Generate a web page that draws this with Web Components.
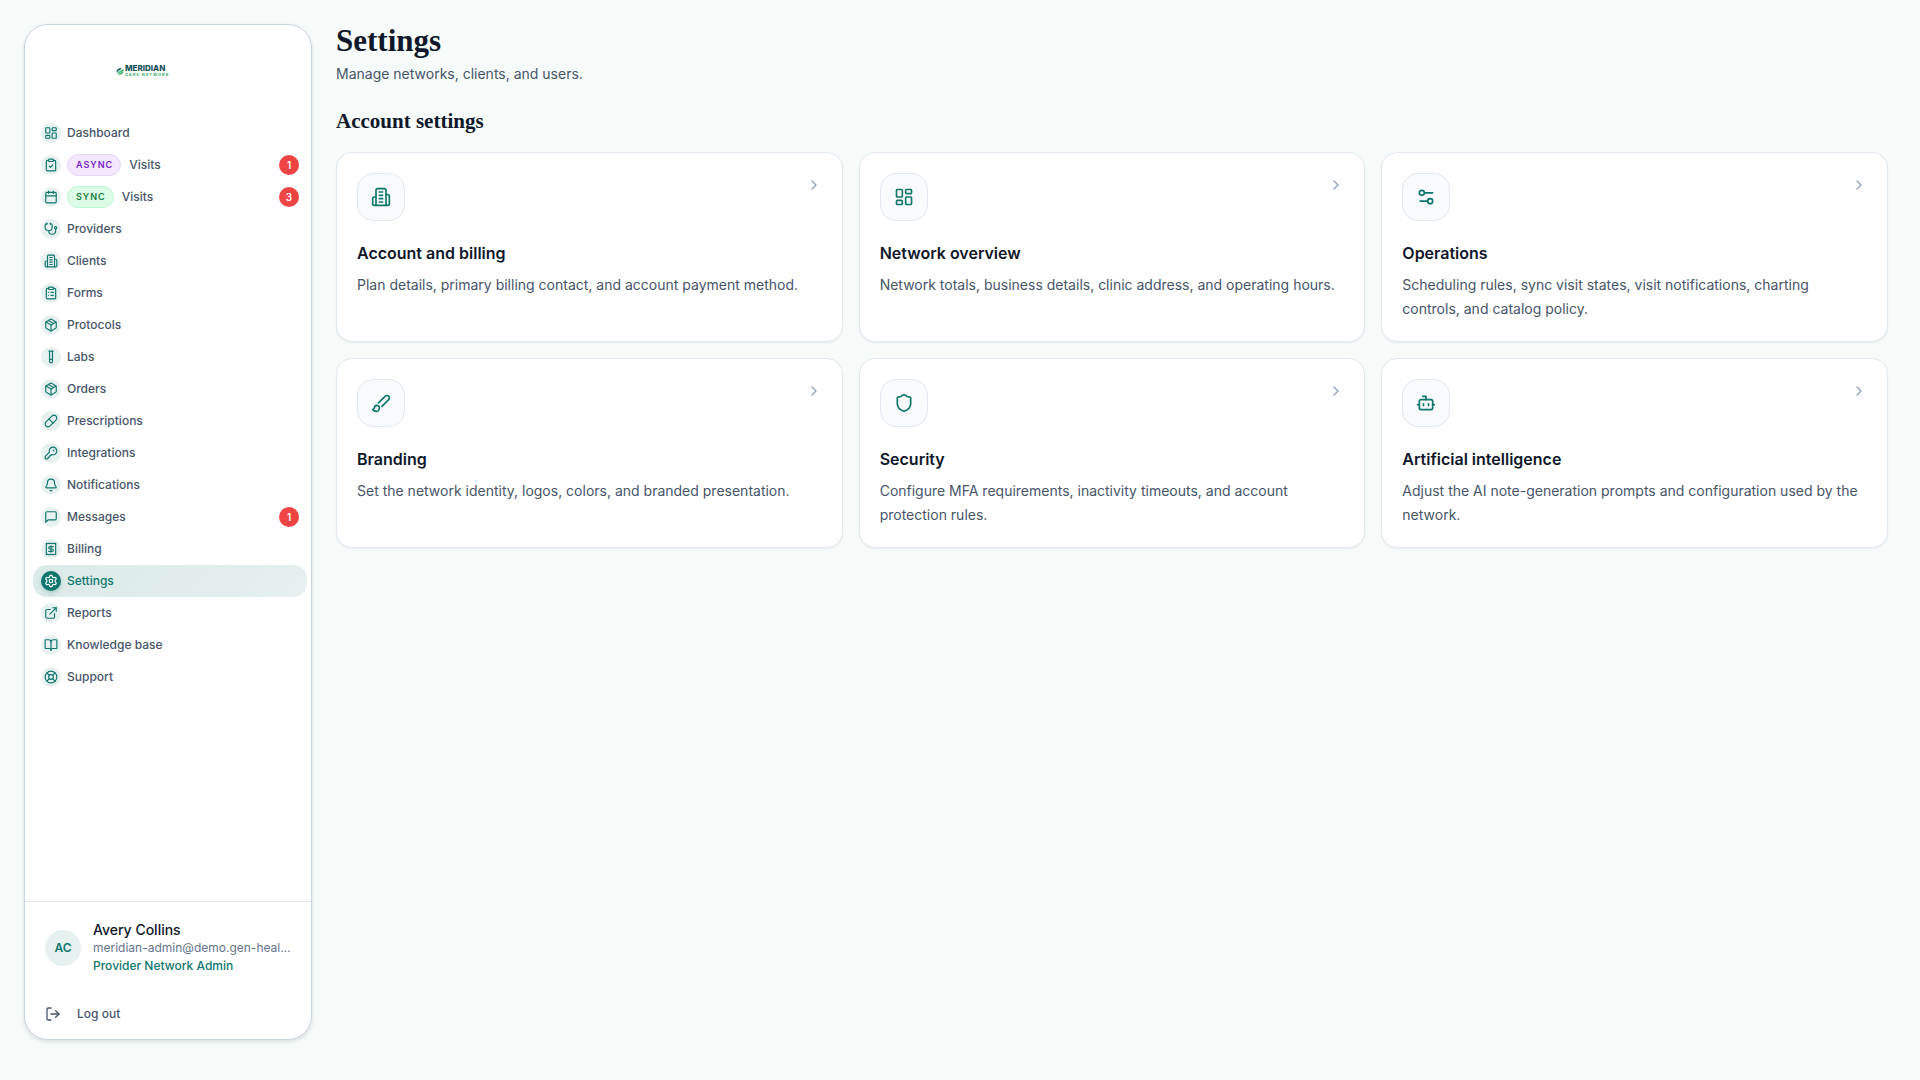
<!DOCTYPE html>
<html lang="en">
<head>
<meta charset="UTF-8">
<meta name="viewport" content="width=device-width, initial-scale=1">
<title>Settings</title>
<style>
    * { box-sizing: border-box; }
    body {
        margin: 0;
        min-height: 100vh;
        background: #f6faf9;
        color: #0f172a;
        font-family: Inter, "Liberation Sans", sans-serif;
        font-size: 14px;
    }
</style>
</head>
<body>
<app-shell>
    <app-sidebar slot="sidebar">
        <brand-logo slot="logo"></brand-logo>
        <nav-item icon="dashboard">Dashboard</nav-item>
        <nav-item icon="clipboard-check" tag="ASYNC" tone="purple" count="1">Visits</nav-item>
        <nav-item icon="calendar" tag="SYNC" tone="green" count="3">Visits</nav-item>
        <nav-item icon="stethoscope">Providers</nav-item>
        <nav-item icon="building">Clients</nav-item>
        <nav-item icon="clipboard-list">Forms</nav-item>
        <nav-item icon="package">Protocols</nav-item>
        <nav-item icon="test-tube">Labs</nav-item>
        <nav-item icon="package">Orders</nav-item>
        <nav-item icon="pill">Prescriptions</nav-item>
        <nav-item icon="key">Integrations</nav-item>
        <nav-item icon="bell">Notifications</nav-item>
        <nav-item icon="message" count="1">Messages</nav-item>
        <nav-item icon="receipt">Billing</nav-item>
        <nav-item icon="settings" active>Settings</nav-item>
        <nav-item icon="external-link">Reports</nav-item>
        <nav-item icon="book-open">Knowledge base</nav-item>
        <nav-item icon="life-buoy">Support</nav-item>
        <user-panel slot="footer" initials="AC">
            <span slot="name">Avery Collins</span>
            <span slot="email">meridian-admin@demo.gen-heal…</span>
            <span slot="role">Provider Network Admin</span>
        </user-panel>
    </app-sidebar>

    <page-header>
        <span slot="title">Settings</span>
        <span slot="subtitle">Manage networks, clients, and users.</span>
    </page-header>
    <settings-section>
        <span slot="heading">Account settings</span>
        <settings-card icon="building">
            <span slot="title">Account and billing</span>
            Plan details, primary billing contact, and account payment method.
        </settings-card>
        <settings-card icon="dashboard">
            <span slot="title">Network overview</span>
            Network totals, business details, clinic address, and operating hours.
        </settings-card>
        <settings-card icon="sliders">
            <span slot="title">Operations</span>
            Scheduling rules, sync visit states, visit notifications, charting controls, and catalog policy.
        </settings-card>
        <settings-card icon="brush">
            <span slot="title">Branding</span>
            Set the network identity, logos, colors, and branded presentation.
        </settings-card>
        <settings-card icon="shield">
            <span slot="title">Security</span>
            Configure MFA requirements, inactivity timeouts, and account protection rules.
        </settings-card>
        <settings-card icon="bot">
            <span slot="title">Artificial intelligence</span>
            Adjust the AI note-generation prompts and configuration used by the network.
        </settings-card>
    </settings-section>
</app-shell>

<script>
// 24x24 stroke icons
const ICONS = {
    'dashboard': '<rect width="7" height="9" x="3" y="3" rx="1"/><rect width="7" height="5" x="14" y="3" rx="1"/><rect width="7" height="9" x="14" y="12" rx="1"/><rect width="7" height="5" x="3" y="16" rx="1"/>',
    'clipboard-check': '<rect width="8" height="4" x="8" y="2" rx="1"/><path d="M16 4h2a2 2 0 0 1 2 2v14a2 2 0 0 1-2 2H6a2 2 0 0 1-2-2V6a2 2 0 0 1 2-2h2"/><path d="m9 14 2 2 4-4"/>',
    'calendar': '<path d="M8 2v4"/><path d="M16 2v4"/><rect width="18" height="18" x="3" y="4" rx="2"/><path d="M3 10h18"/>',
    'stethoscope': '<path d="M11 2v2"/><path d="M5 2v2"/><path d="M5 3H4a2 2 0 0 0-2 2v4a6 6 0 0 0 12 0V5a2 2 0 0 0-2-2h-1"/><path d="M8 15a6 6 0 0 0 12 0v-3"/><circle cx="20" cy="10" r="2"/>',
    'building': '<path d="M6 22V4a2 2 0 0 1 2-2h8a2 2 0 0 1 2 2v18Z"/><path d="M6 12H4a2 2 0 0 0-2 2v6a2 2 0 0 0 2 2h2"/><path d="M18 9h2a2 2 0 0 1 2 2v9a2 2 0 0 1-2 2h-2"/><path d="M10 6h4"/><path d="M10 10h4"/><path d="M10 14h4"/><path d="M10 18h4"/>',
    'clipboard-list': '<rect width="8" height="4" x="8" y="2" rx="1"/><path d="M16 4h2a2 2 0 0 1 2 2v14a2 2 0 0 1-2 2H6a2 2 0 0 1-2-2V6a2 2 0 0 1 2-2h2"/><path d="M12 11h4"/><path d="M12 16h4"/><path d="M8 11h.01"/><path d="M8 16h.01"/>',
    'package': '<path d="m7.5 4.27 9 5.15"/><path d="M21 8a2 2 0 0 0-1-1.73l-7-4a2 2 0 0 0-2 0l-7 4A2 2 0 0 0 3 8v8a2 2 0 0 0 1 1.73l7 4a2 2 0 0 0 2 0l7-4A2 2 0 0 0 21 16Z"/><path d="m3.3 7 8.7 5 8.7-5"/><path d="M12 22V12"/>',
    'test-tube': '<path d="M14.5 2v17.5c0 1.4-1.1 2.5-2.5 2.5c-1.4 0-2.5-1.1-2.5-2.5V2"/><path d="M8.5 2h7"/><path d="M14.5 16h-5"/>',
    'pill': '<path d="m10.5 20.5 10-10a4.95 4.95 0 1 0-7-7l-10 10a4.95 4.95 0 1 0 7 7Z"/><path d="m8.5 8.5 7 7"/>',
    'key': '<path d="M2.586 17.414A2 2 0 0 0 2 18.828V21a1 1 0 0 0 1 1h3a1 1 0 0 0 1-1v-1a1 1 0 0 1 1-1h1a1 1 0 0 0 1-1v-1a1 1 0 0 1 1-1h.172a2 2 0 0 0 1.414-.586l.814-.814a6.5 6.5 0 1 0-4-4z"/><circle cx="16.5" cy="7.5" r=".5" fill="currentColor"/>',
    'bell': '<path d="M10.268 21a2 2 0 0 0 3.464 0"/><path d="M3.262 15.326A1 1 0 0 0 4 17h16a1 1 0 0 0 .74-1.673C19.41 13.956 18 12.499 18 8A6 6 0 0 0 6 8c0 4.499-1.411 5.956-2.738 7.326"/>',
    'message': '<path d="M21 15a2 2 0 0 1-2 2H7l-4 4V5a2 2 0 0 1 2-2h14a2 2 0 0 1 2 2z"/>',
    'receipt': '<path d="M4 2v20l2-1 2 1 2-1 2 1 2-1 2 1 2-1 2 1V2l-2 1-2-1-2 1-2-1-2 1-2-1-2 1Z"/><path d="M16 8h-6a2 2 0 1 0 0 4h4a2 2 0 1 1 0 4H8"/><path d="M12 17.5v-11"/>',
    'settings': '<path d="M9.671 4.136a2.34 2.34 0 0 1 4.659 0 2.34 2.34 0 0 0 3.319 1.915 2.34 2.34 0 0 1 2.33 4.033 2.34 2.34 0 0 0 0 3.831 2.34 2.34 0 0 1-2.33 4.033 2.34 2.34 0 0 0-3.319 1.915 2.34 2.34 0 0 1-4.659 0 2.34 2.34 0 0 0-3.32-1.915 2.34 2.34 0 0 1-2.33-4.033 2.34 2.34 0 0 0 0-3.831A2.34 2.34 0 0 1 6.35 6.051a2.34 2.34 0 0 0 3.319-1.915"/><circle cx="12" cy="12" r="3"/>',
    'external-link': '<path d="M15 3h6v6"/><path d="M10 14 21 3"/><path d="M18 13v6a2 2 0 0 1-2 2H5a2 2 0 0 1-2-2V8a2 2 0 0 1 2-2h6"/>',
    'book-open': '<path d="M12 7v14"/><path d="M3 18a1 1 0 0 1-1-1V4a1 1 0 0 1 1-1h5a4 4 0 0 1 4 4 4 4 0 0 1 4-4h5a1 1 0 0 1 1 1v13a1 1 0 0 1-1 1h-6a3 3 0 0 0-3 3 3 3 0 0 0-3-3z"/>',
    'life-buoy': '<circle cx="12" cy="12" r="10"/><path d="m4.93 4.93 4.24 4.24"/><path d="m14.83 9.17 4.24-4.24"/><path d="m14.83 14.83 4.24 4.24"/><path d="m9.17 14.83-4.24 4.24"/><circle cx="12" cy="12" r="4"/>',
    'log-out': '<path d="M9 21H5a2 2 0 0 1-2-2V5a2 2 0 0 1 2-2h4"/><path d="m16 17 5-5-5-5"/><path d="M21 12H9"/>',
    'sliders': '<path d="M20 7h-9"/><path d="M14 17H5"/><circle cx="17" cy="17" r="3"/><circle cx="7" cy="7" r="3"/>',
    'brush': '<path d="m9.06 11.9 8.07-8.06a2.85 2.85 0 1 1 4.03 4.03l-8.06 8.08"/><path d="M7.07 14.94c-1.66 0-3 1.35-3 3.02 0 1.33-2.5 1.52-2 2.02 1.08 1.1 2.49 2.02 4 2.02 2.2 0 4-1.8 4-4.04a3.01 3.01 0 0 0-3-3.02z"/>',
    'shield': '<path d="M20 13c0 5-3.5 7.5-7.66 8.95a1 1 0 0 1-.67-.01C7.5 20.5 4 18 4 13V6a1 1 0 0 1 1-1c2 0 4.5-1.2 6.24-2.72a1.17 1.17 0 0 1 1.52 0C14.51 3.81 17 5 19 5a1 1 0 0 1 1 1z"/>',
    'bot': '<path d="M12 8V4H8"/><rect width="16" height="12" x="4" y="8" rx="2"/><path d="M2 14h2"/><path d="M20 14h2"/><path d="M15 13v2"/><path d="M9 13v2"/>',
    'chevron-right': '<path d="m9 18 6-6-6-6"/>'
};

class AppIcon extends HTMLElement {
    constructor() {
        super();
        this.attachShadow({ mode: 'open' });
    }
    connectedCallback() {
        this.shadowRoot.innerHTML = `
            <style>
                :host { display: block; flex: none; width: var(--icon-size, 16px); height: var(--icon-size, 16px); }
                svg { display: block; width: 100%; height: 100%; }
            </style>
            <svg viewBox="0 0 24 24" fill="none" stroke="currentColor" stroke-width="2" stroke-linecap="round" stroke-linejoin="round" aria-hidden="true">${ICONS[this.getAttribute('name')] || ''}</svg>
        `;
    }
}
customElements.define('app-icon', AppIcon);

class AppShell extends HTMLElement {
    constructor() {
        super();
        this.attachShadow({ mode: 'open' });
        this.shadowRoot.innerHTML = `
            <style>
                :host {
                    display: grid;
                    grid-template-columns: 288px minmax(0, 1fr);
                    align-items: start;
                    gap: 24px;
                    padding: 24px 32px 40px 24px;
                }
                main { display: flex; flex-direction: column; gap: 24px; }
            </style>
            <slot name="sidebar"></slot>
            <main><slot></slot></main>
        `;
    }
}
customElements.define('app-shell', AppShell);

class BrandLogo extends HTMLElement {
    constructor() {
        super();
        this.attachShadow({ mode: 'open' });
        this.shadowRoot.innerHTML = `
            <style>
                :host { display: flex; align-items: center; gap: 1px; }
                svg { width: 8px; height: 8px; }
                .words { display: flex; flex-direction: column; }
                .name { font-size: 8px; line-height: 7px; font-weight: 800; color: #14505a; }
                .sub { font-size: 4px; line-height: 5px; font-weight: 700; letter-spacing: 1px; color: #2fae66; }
            </style>
            <svg viewBox="0 0 24 24" aria-hidden="true">
                <path d="M3 19C-1 10 5 3 16 2c-1 4-2 6-6 8-4 2-6 4-7 9z" fill="#17605f"/>
                <path d="M5 21c0-6 3-9 8-11 4-1 6-2 8-5 4 9-1 17-9 18-3 0-5-1-7-2z" fill="#2fae66"/>
                <path d="M4 20c2-5 6-9 13-12M8 21c3-4 6-6 11-7" fill="none" stroke="#fff" stroke-width="2"/>
            </svg>
            <div class="words">
                <span class="name">MERIDIAN</span>
                <span class="sub">CARE NETWORK</span>
            </div>
        `;
    }
}
customElements.define('brand-logo', BrandLogo);

class AppSidebar extends HTMLElement {
    constructor() {
        super();
        this.attachShadow({ mode: 'open' });
        this.shadowRoot.innerHTML = `
            <style>
                :host {
                    box-sizing: border-box;
                    display: flex;
                    flex-direction: column;
                    min-height: calc(100vh - 64px);
                    background: #fff;
                    border: 1px solid #cbd5e1;
                    border-radius: 24px;
                    box-shadow: 0 2px 4px rgba(15, 23, 42, 0.12);
                    overflow: hidden;
                }
                .logo { padding: 40px 24px 40px 91px; }
                nav { flex: 1; padding: 0 4px 16px 8px; }
            </style>
            <div class="logo"><slot name="logo"></slot></div>
            <nav aria-label="Main"><slot></slot></nav>
            <slot name="footer"></slot>
        `;
    }
}
customElements.define('app-sidebar', AppSidebar);

class NavItem extends HTMLElement {
    constructor() {
        super();
        this.attachShadow({ mode: 'open' });
    }
    connectedCallback() {
        const tag = this.getAttribute('tag');
        const count = this.getAttribute('count');
        this.shadowRoot.innerHTML = `
            <style>
                :host { display: block; }
                a {
                    display: flex; align-items: center; gap: 6px;
                    height: 32px; padding: 0 8px;
                    border-radius: 14px;
                    color: #475569; text-decoration: none;
                    font-size: 12px; line-height: 16px; font-weight: 500;
                }
                a:hover { background: #f1f5f9; }
                .icon {
                    --icon-size: 14px;
                    display: grid; place-items: center; flex: none;
                    width: 20px; height: 20px; border-radius: 50%;
                    background: #e7f1f0; color: #0f766e;
                }
                .label { display: flex; align-items: center; gap: 8px; flex: 1; }
                .tag {
                    padding: 2px 7px 2px 8px; border: 1px solid; border-radius: 11px;
                    font-size: 9px; font-weight: 600; letter-spacing: 1px;
                }
                .purple { color: #7e22ce; background: #f3e8ff; border-color: #e9d5ff; }
                .green { color: #15803d; background: #dcfce7; border-color: #bbf7d0; }
                .count {
                    width: 20px; border-radius: 10px;
                    background: #ef4444; color: #fff;
                    font-size: 10px; line-height: 20px; font-weight: 600; text-align: center;
                }
                :host([active]) a { color: #0f766e; background: linear-gradient(135deg, #dbeae8, #e5f0ef); }
                :host([active]) .icon { background: #0f766e; color: #fff; box-shadow: 0 2px 4px rgba(15, 118, 110, 0.25); }
            </style>
            <a href="#"${this.hasAttribute('active') ? ' aria-current="page"' : ''}>
                <span class="icon"><app-icon name="${this.getAttribute('icon')}"></app-icon></span>
                <span class="label">
                    ${tag ? `<span class="tag ${this.getAttribute('tone')}">${tag}</span>` : ''}
                    <slot></slot>
                </span>
                ${count ? `<span class="count">${count}</span>` : ''}
            </a>
        `;
    }
}
customElements.define('nav-item', NavItem);

class UserPanel extends HTMLElement {
    constructor() {
        super();
        this.attachShadow({ mode: 'open' });
    }
    connectedCallback() {
        this.shadowRoot.innerHTML = `
            <style>
                :host { display: block; padding: 19px 16px 7px; border-top: 1px solid #e2e8f0; }
                .user { display: flex; align-items: center; gap: 12px; padding: 0 4px; }
                .avatar {
                    flex: none; width: 36px; border-radius: 50%;
                    background: #e7f1f0; color: #0f766e;
                    font-size: 12px; line-height: 36px; font-weight: 600; text-align: center;
                }
                .info { min-width: 0; font-size: 12px; line-height: 18px; }
                .info div { white-space: nowrap; }
                .name { color: #0f172a; font-size: 14px; font-weight: 500; }
                .email { color: #64748b; }
                .role { color: #0f766e; font-weight: 500; }
                button {
                    display: flex; align-items: center; gap: 16px;
                    width: 100%; height: 36px; margin-top: 21px; padding: 0 4px;
                    border: 0; border-radius: 12px; background: none; color: #475569;
                    font: 500 12px/16px Inter, "Liberation Sans", sans-serif;
                    cursor: pointer;
                }
                button:hover { background: #f1f5f9; }
            </style>
            <div class="user">
                <div class="avatar">${this.getAttribute('initials')}</div>
                <div class="info">
                    <div class="name"><slot name="name"></slot></div>
                    <div class="email"><slot name="email"></slot></div>
                    <div class="role"><slot name="role"></slot></div>
                </div>
            </div>
            <button type="button"><app-icon name="log-out"></app-icon>Log out</button>
        `;
    }
}
customElements.define('user-panel', UserPanel);

class PageHeader extends HTMLElement {
    constructor() {
        super();
        this.attachShadow({ mode: 'open' });
        this.shadowRoot.innerHTML = `
            <style>
                :host { display: block; }
                h1 { margin: 0; font: 700 31px/34px "Liberation Serif", serif; color: #0f172a; }
                p { margin: 6px 0 0; font-size: 14px; line-height: 20px; color: #475569; }
            </style>
            <h1><slot name="title"></slot></h1>
            <p><slot name="subtitle"></slot></p>
        `;
    }
}
customElements.define('page-header', PageHeader);

class SettingsSection extends HTMLElement {
    constructor() {
        super();
        this.attachShadow({ mode: 'open' });
        this.shadowRoot.innerHTML = `
            <style>
                :host { display: block; }
                h2 { margin: 0 0 18px; font: 700 21px/26px "Liberation Serif", serif; color: #0f172a; }
                .grid { display: grid; grid-template-columns: repeat(3, minmax(0, 1fr)); gap: 16px; }
                @media (max-width: 1200px) {
                    .grid { grid-template-columns: repeat(2, minmax(0, 1fr)); }
                }
            </style>
            <section>
                <h2><slot name="heading"></slot></h2>
                <div class="grid"><slot></slot></div>
            </section>
        `;
    }
}
customElements.define('settings-section', SettingsSection);

class SettingsCard extends HTMLElement {
    constructor() {
        super();
        this.attachShadow({ mode: 'open' });
    }
    connectedCallback() {
        this.shadowRoot.innerHTML = `
            <style>
                :host { display: block; }
                a {
                    box-sizing: border-box; display: block; height: 100%; padding: 20px;
                    background: #fff; border: 1px solid #e2e8f0; border-radius: 16px;
                    box-shadow: 0 1px 2px rgba(15, 23, 42, 0.06);
                    color: #475569; text-decoration: none;
                }
                a:hover { border-color: #cbd5e1; }
                .top { display: flex; justify-content: space-between; align-items: flex-start; }
                .icon {
                    --icon-size: 20px;
                    box-sizing: border-box; display: grid; place-items: center;
                    width: 48px; height: 48px;
                    background: #f8fafc; border: 1px solid #e2e8f0; border-radius: 16px;
                    color: #0f766e;
                }
                .chevron { padding-top: 4px; color: #94a3b8; }
                h3 { margin: 20px 0 8px; font-size: 16px; line-height: 24px; font-weight: 600; color: #0f172a; }
                p { margin: 0; font-size: 14px; line-height: 24px; }
            </style>
            <a href="#">
                <div class="top">
                    <span class="icon"><app-icon name="${this.getAttribute('icon')}"></app-icon></span>
                    <span class="chevron"><app-icon name="chevron-right"></app-icon></span>
                </div>
                <h3><slot name="title"></slot></h3>
                <p><slot></slot></p>
            </a>
        `;
    }
}
customElements.define('settings-card', SettingsCard);
</script>
</body>
</html>
